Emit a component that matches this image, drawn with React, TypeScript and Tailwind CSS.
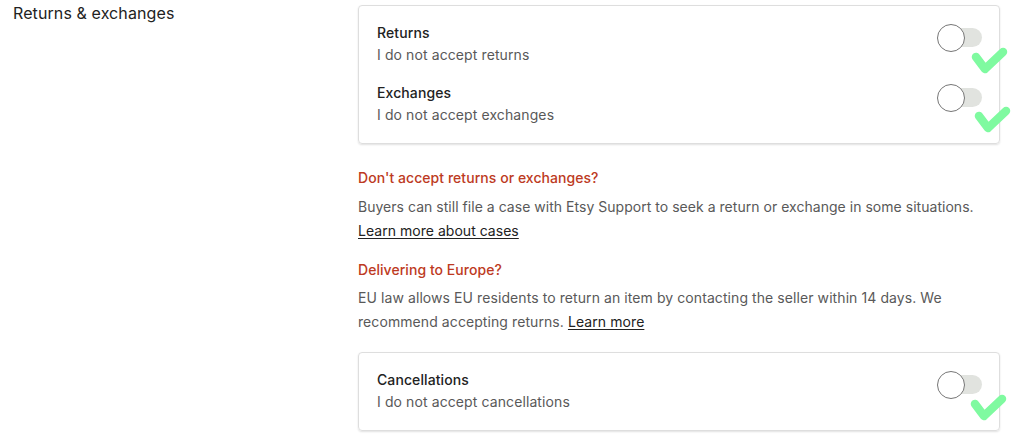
import React from "react";

function Toggle() {
  return (
    <div className="relative w-[45px] h-[28px] shrink-0 mt-[2px]">
      <div className="absolute right-0 top-[4px] w-[36px] h-[19px] rounded-full bg-[#e1e3df]" />
      <div className="absolute left-0 top-0 w-[28px] h-[28px] rounded-full border border-[#767676] bg-white" />
    </div>
  );
}

function Check({ className }: { className: string }) {
  return (
    <svg
      className={"absolute pointer-events-none " + className}
      width="38"
      height="30"
      viewBox="0 0 38 30"
      fill="none"
    >
      <path
        d="M5 11 L14 23 L32 6"
        stroke="#7ffaa0"
        strokeWidth="8.5"
        strokeLinecap="round"
        strokeLinejoin="round"
      />
    </svg>
  );
}

function Row({ title, sub }: { title: string; sub: string }) {
  return (
    <div className="flex items-start justify-between">
      <div>
        <div className="text-[14px] leading-[22px] font-medium text-[#222222] tracking-[0.1px]">{title}</div>
        <div className="text-[14px] leading-[22px] text-[#595959] tracking-[0.1px]">{sub}</div>
      </div>
      <Toggle />
    </div>
  );
}

export default function App() {
  return (
    <div
      className="w-[1017px] h-[437px] bg-white flex overflow-hidden"
      style={{ fontFamily: "Inter, 'Noto Sans', sans-serif" }}
    >
      <div className="w-[358px] shrink-0 pl-[13px] pt-[1px]">
        <div className="text-[16px] leading-[24px] text-[#222222] tracking-[0.1px]">Returns &amp; exchanges</div>
      </div>
      <div className="w-[642px] shrink-0 pt-[5px]">
        <div className="relative border border-[#dedede] rounded-[4px] shadow-[0_1px_2px_rgba(0,0,0,0.12)] pl-[18px] pr-[17px] pt-[16px] pb-[17px] flex flex-col gap-[16px]">
          <Row title="Returns" sub="I do not accept returns" />
          <Row title="Exchanges" sub="I do not accept exchanges" />
          <Check className="left-[612px] top-[40px]" />
          <Check className="left-[615px] top-[99px]" />
        </div>
        <div className="mt-[22px] text-[14px] leading-[24px] font-medium text-[#bd3a22] tracking-[0.05px]">
          Don't accept returns or exchanges?
        </div>
        <div className="mt-[5px] text-[14px] leading-[24px] text-[#595959] tracking-[0.03px]">
          Buyers can still file a case with Etsy Support to seek a return or exchange in some situations.
          <br />
          <a className="underline text-[#222222] underline-offset-2">Learn more about cases</a>
        </div>
        <div className="mt-[15px] text-[14px] leading-[24px] font-medium text-[#bd3a22] tracking-[0.05px]">
          Delivering to Europe?
        </div>
        <div className="mt-[4px] text-[14px] leading-[24px] text-[#595959] tracking-[0.08px]">
          EU law allows EU residents to return an item by contacting the seller within 14 days. We
          <br />
          recommend accepting returns.{" "}
          <a className="underline text-[#222222] underline-offset-2">Learn more</a>
        </div>
        <div className="mt-[18px] relative border border-[#dedede] rounded-[4px] shadow-[0_1px_2px_rgba(0,0,0,0.12)] pl-[18px] pr-[17px] pt-[16px] pb-[17px]">
          <Row title="Cancellations" sub="I do not accept cancellations" />
          <Check className="left-[611px] top-[40px]" />
        </div>
      </div>
    </div>
  );
}
